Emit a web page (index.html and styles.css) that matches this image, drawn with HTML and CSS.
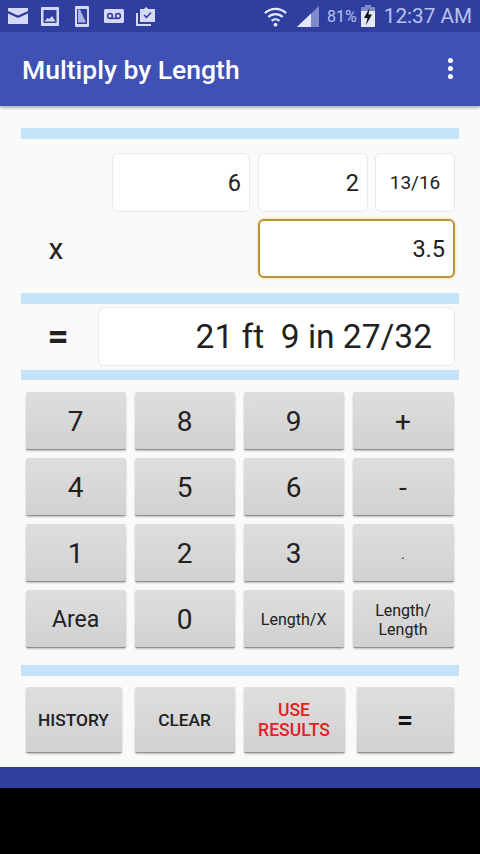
FILE: index.html
```html
<!DOCTYPE html>
<html lang="en">
<head>
    <meta charset="UTF-8">
    <meta name="viewport" content="width=device-width, initial-scale=1.0">
    <title>Multiply by Length</title>
    <link rel="stylesheet" href="styles.css">
</head>
<body>
    <div class="status-bar">
        <div class="status-icons">
            <svg class="mail" width="20" height="16" viewBox="0 0 20 16"><path d="M0 0h20v3L10 7.500 0 3z M0 5.500 10 10l10-4.500V16H0z" fill="#d5d9f5"/></svg>
            <svg class="pic" width="18" height="19" viewBox="0 0 18 19"><path fill-rule="evenodd" d="M1 0h16a1 1 0 0 1 1 1v17a1 1 0 0 1-1 1H1a1 1 0 0 1-1-1V1a1 1 0 0 1 1-1z M2.500 3v13h13V3z" fill="#d5d9f5"/><path d="M3.500 14.500 6.500 11l2 1 2.500-3 3.500 5.500z" fill="#d5d9f5"/></svg>
            <svg class="phone" width="14" height="21" viewBox="0 0 14 21"><path fill-rule="evenodd" d="M1 0h12a1 1 0 0 1 1 1v19a1 1 0 0 1-1 1H1a1 1 0 0 1-1-1V1a1 1 0 0 1 1-1z M2 3v15h10V3z" fill="#d5d9f5"/><path d="M3 3.500h2l6 13H3z" fill="#aab2e6"/></svg>
            <svg class="voicemail" width="20" height="14" viewBox="0 0 20 14"><rect width="20" height="14" rx="1.500" fill="#d5d9f5"/><circle cx="6" cy="7" r="2.400" fill="none" stroke="#303f9f" stroke-width="1.500"/><circle cx="14" cy="7" r="2.400" fill="none" stroke="#303f9f" stroke-width="1.500"/><path d="M6 9.400h8" stroke="#303f9f" stroke-width="1.500"/></svg>
            <svg class="clip" width="20" height="20" viewBox="0 0 20 20"><path d="M1 7v12h14" fill="none" stroke="#d5d9f5" stroke-width="2"/><path fill-rule="evenodd" d="M4 3h4l2-2 2 2h7v13H4z M7.500 9.500l3 3 5-5.500-1-1-4 4.300-2-1.800z" fill="#d5d9f5"/></svg>
        </div>
        <div class="status-right">
            <svg class="wifi" width="25" height="21" viewBox="0 0 26 21"><path d="M2 7a16 16 0 0 1 22 0M5.500 11a11 11 0 0 1 15 0M9 15a6 6 0 0 1 8 0" fill="none" stroke="#e4e7fa" stroke-width="2.300"/><circle cx="13" cy="19" r="2" fill="#e4e7fa"/></svg>
            <svg class="signal" width="22" height="21" viewBox="0 0 22 21"><path d="M0 21 22 0v21z" fill="#7f8bc9"/><path d="M0 21 14 7.600V21z" fill="#e4e7fa"/></svg>
            <span class="battery-text">81%</span>
            <svg class="battery" width="14" height="22" viewBox="0 0 14 22"><path d="M4 0h6v2H4z" fill="#7f8bc9"/><path d="M0 2h14v5H0z" fill="#7f8bc9"/><path d="M0 6h14v16H0z" fill="#e4e7fa"/><path d="M8.500 3 3 13h3.500L5 20l6-10.500H7.500z" fill="#111"/></svg>
            <span class="clock">12:37 AM</span>
        </div>
    </div>
    <div class="toolbar">
        <div class="title">Multiply by Length</div>
        <div class="overflow"><span></span><span></span><span></span></div>
    </div>
    <div class="content">
        <div class="divider"></div>
        <div class="entry-row first">
            <div class="field feet">6</div>
            <div class="field inches">2</div>
            <div class="field fraction">13/16</div>
        </div>
        <div class="entry-row second">
            <div class="sign times">x</div>
            <div class="field factor">3.5</div>
        </div>
        <div class="divider mid"></div>
        <div class="result-row">
            <div class="sign equals">=</div>
            <div class="field result">21 ft&nbsp; 9 in 27/32</div>
        </div>
        <div class="divider low"></div>
        <div class="keypad">
            <button class="key">7</button>
            <button class="key">8</button>
            <button class="key">9</button>
            <button class="key">+</button>
            <button class="key">4</button>
            <button class="key">5</button>
            <button class="key">6</button>
            <button class="key">-</button>
            <button class="key">1</button>
            <button class="key">2</button>
            <button class="key">3</button>
            <button class="key dot">.</button>
            <button class="key area">Area</button>
            <button class="key">0</button>
            <button class="key small">Length/X</button>
            <button class="key small">Length/<br>Length</button>
        </div>
        <div class="divider bottom"></div>
        <div class="actions">
            <button class="key action history">HISTORY</button>
            <button class="key action clear">CLEAR</button>
            <button class="key action use">USE<br>RESULTS</button>
            <button class="key action total">=</button>
        </div>
    </div>
    <div class="footer"></div>
    <div class="black"></div>
</body>
</html>
```
FILE: styles.css
```css
body {
    margin: 0;
    width: 480px;
    height: 854px;
    display: flex;
    flex-direction: column;
    overflow: hidden;
    background-color: #000;
    font-family: Roboto, "Liberation Sans", sans-serif;
    color: #212121;
}

.status-bar {
    height: 32px;
    flex: none;
    background-color: #303f9f;
    display: flex;
    align-items: center;
    justify-content: space-between;
    padding: 0 8px;
    box-sizing: border-box;
}

.status-icons {
    display: flex;
    align-items: center;
}

.status-icons svg {
    flex: none;
}

.status-icons .pic {
    margin-left: 13px;
}

.status-icons .phone {
    margin-left: 16px;
}

.status-icons .voicemail {
    margin-left: 15px;
}

.status-icons .clip {
    margin-left: 12px;
}

.status-right {
    display: flex;
    align-items: center;
}

.wifi {
    margin-right: 9px;
}

.signal {
    margin-right: 8px;
}

.battery-text {
    font-size: 16px;
    color: #b9c1ee;
    margin-right: 4px;
}

.clock {
    font-size: 20.7px;
    color: #b9c1ee;
    margin-left: 9px;
}

.toolbar {
    height: 74px;
    flex: none;
    background-color: #3f51b5;
    display: flex;
    align-items: center;
    justify-content: space-between;
    padding: 1px 27px 0 22px;
    box-shadow: 0 2px 3px rgba(0, 0, 0, 0.3);
    position: relative;
    box-sizing: border-box;
}

.title {
    font-size: 26.5px;
    font-weight: 500;
    color: #fff;
}

.overflow {
    display: flex;
    flex-direction: column;
    gap: 3px;
    margin-top: -3px;
}

.overflow span {
    width: 5px;
    height: 5px;
    border-radius: 50%;
    background-color: #fff;
}

.content {
    height: 661px;
    flex: none;
    box-sizing: border-box;
    background-color: #fafafa;
    padding: 22px 21px 0;
}

.divider {
    height: 11px;
    background-color: #c5e4fa;
}

.entry-row {
    display: flex;
    justify-content: flex-end;
    gap: 8px;
}

.entry-row.first {
    margin-top: 14px;
    padding-right: 4px;
}

.entry-row.second {
    margin-top: 7px;
    padding-right: 4px;
    justify-content: space-between;
    align-items: center;
}

.field {
    height: 59px;
    box-sizing: border-box;
    background-color: #fff;
    border: 1px solid #e8e8e8;
    border-radius: 6px;
    display: flex;
    align-items: center;
    justify-content: flex-end;
    font-size: 23.5px;
    padding-right: 8px;
}

.feet {
    width: 138px;
}

.inches {
    width: 110px;
}

.fraction {
    width: 80px;
    margin-left: -1px;
    justify-content: center;
    padding-right: 0;
    font-size: 19px;
}

.factor {
    width: 197px;
    border: 2px solid #b89238;
    box-shadow: 0 0 3px #f5cf70;
    padding-right: 8px;
}

.sign {
    font-size: 30px;
    width: 70px;
    text-align: center;
}

.divider.mid {
    margin-top: 15px;
}

.result-row {
    display: flex;
    justify-content: space-between;
    align-items: center;
    margin-top: 3px;
    padding-right: 4px;
}

.equals {
    width: 74px;
    font-size: 37px;
    font-weight: 700;
}

.result {
    width: 357px;
    font-size: 33.5px;
    padding-right: 22px;
}

.divider.low {
    height: 10px;
    margin-top: 4px;
}

.keypad {
    display: grid;
    grid-template-columns: 100.34px 100.34px 100.34px 101px;
    grid-auto-rows: 57px;
    column-gap: 8.66px;
    row-gap: 9px;
    margin: 12px 0 0 5px;
}

.key {
    border: none;
    border-radius: 2px;
    padding: 2px 1px 0 0;
    background: linear-gradient(#dedede, #d1d1d1);
    box-shadow: 0 1px 0 #8f8f8f, 0 2px 2px rgba(0, 0, 0, 0.25);
    font-family: inherit;
    font-size: 28px;
    color: #212121;
}

.key.dot {
    font-size: 14px;
}

.key.area {
    font-size: 23px;
}

.key.small {
    font-size: 16px;
    line-height: 19px;
}

.divider.bottom {
    margin-top: 18px;
}

.actions {
    display: flex;
    margin: 11px 0 0 5px;
}

.action {
    height: 65px;
    width: 100px;
    padding: 0 1px 0 0;
    font-size: 17.3px;
    font-weight: 500;
    line-height: 20px;
}

.history {
    width: 96px;
}

.clear {
    margin-left: 13px;
}

.use {
    width: 101px;
    margin-left: 9px;
    font-size: 17.6px;
    color: #e81c24;
}

.total {
    width: 97px;
    margin-left: 12px;
    font-size: 28px;
    font-weight: 700;
    color: #111;
}

.footer {
    height: 21px;
    flex: none;
    background-color: #303f9f;
}

.black {
    flex: 1;
    background-color: #000;
}
```
